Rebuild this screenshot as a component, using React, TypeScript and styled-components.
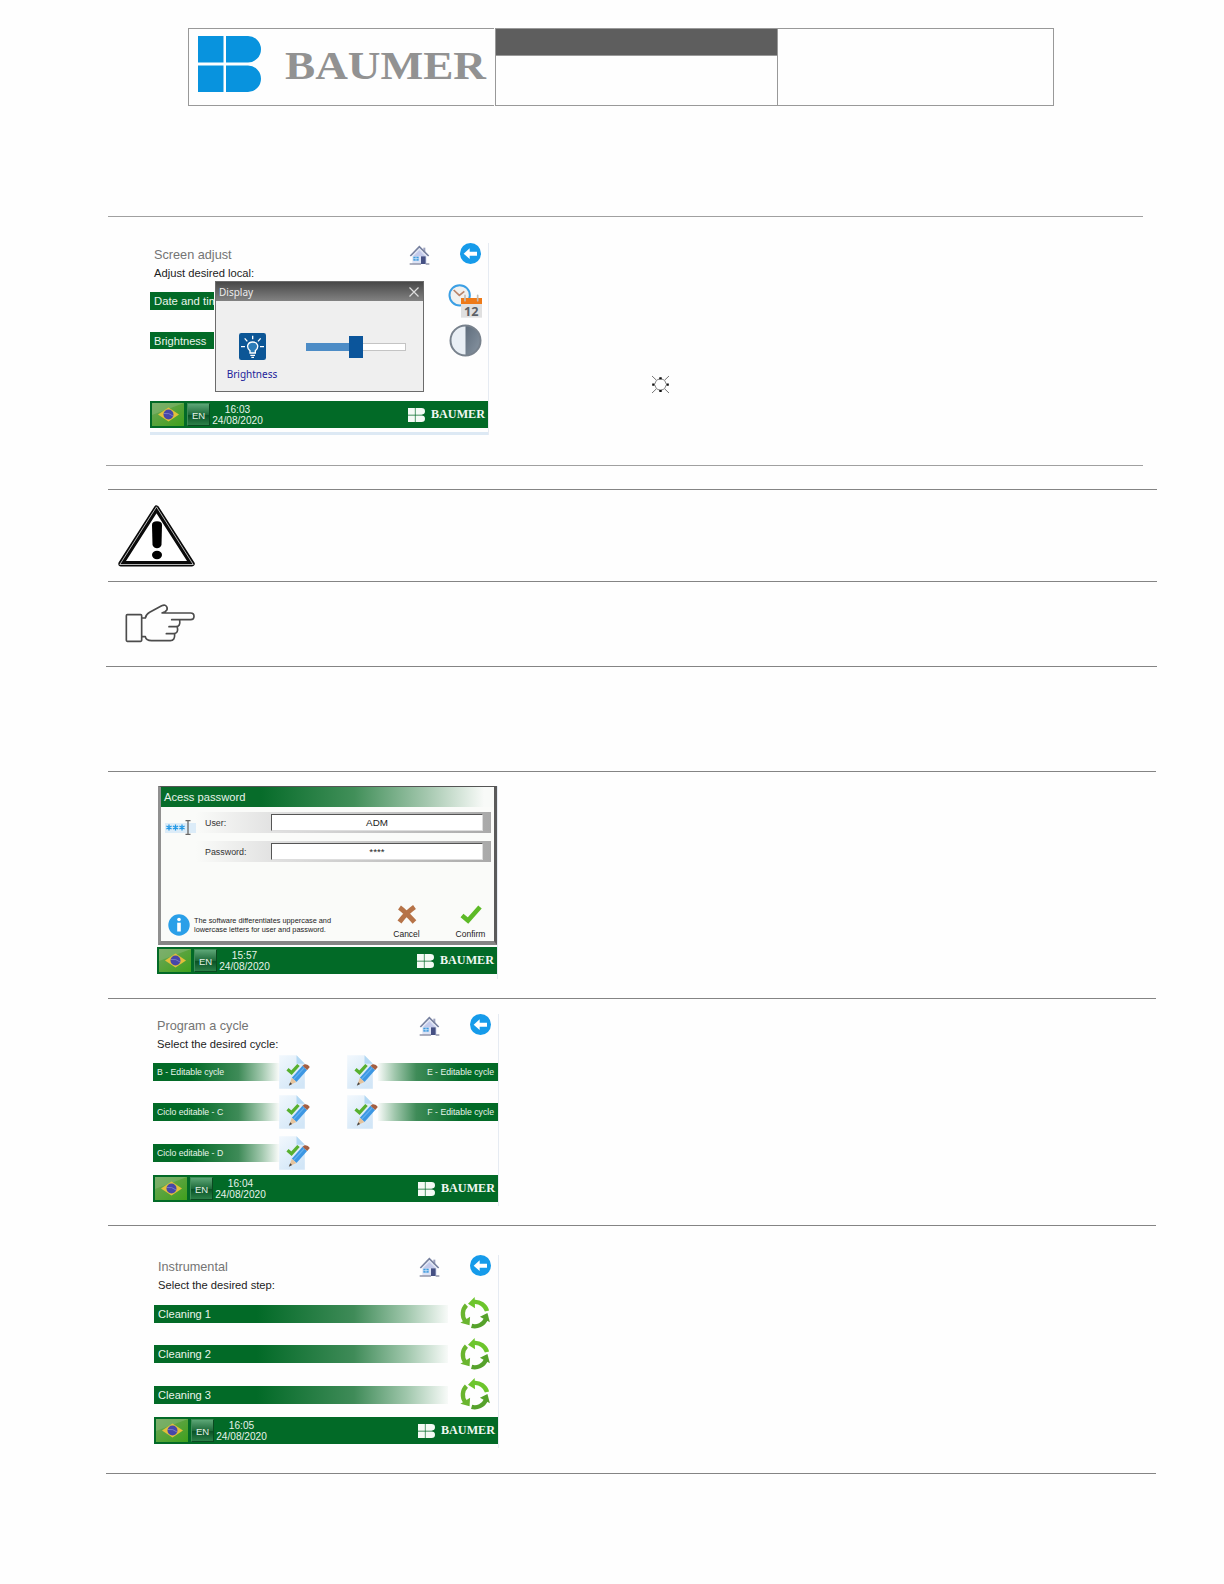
import React from 'react';
import styled, { createGlobalStyle } from 'styled-components';

const GlobalStyle = createGlobalStyle`
  * {
    box-sizing: border-box;
  }
  body {
    margin: 0;
    background: #fefefe;
    font-family: 'Liberation Sans', Arial, sans-serif;
  }
  svg {
    display: block;
    flex: none;
    overflow: visible;
  }
`;

const GREEN = '#026a27';

const Page = styled.div`
  width: 1224px;
  height: 1584px;
  padding-top: 28px;
  overflow: hidden;
`;
const Letterhead = styled.header`
  display: grid;
  grid-template-columns: 306px 283px 276px;
  column-gap: 0;
  height: 78px;
  margin: 0 0 110px 188px;
`;
const LogoCell = styled.div`
  border: 1px solid #999;
  border-right: 0;
  padding: 7px 0 0 9px;
`;
const MiddleCell = styled.div`
  margin-left: 1px;
  width: 283px;
  border: 1px solid #999;
`;
const DarkStrip = styled.div`
  height: 27px;
  background: #5e5e5e;
  border-bottom: 1px solid #999;
`;
const LastCell = styled.div`
  margin-left: 1px;
  width: 276px;
  border: 1px solid #999;
  border-left: 0;
`;

const Row = styled.section<{
  $h: number;
  $w: number;
  $wide?: boolean;
  $light?: boolean;
  $pad?: string;
}>`
  display: flex;
  align-items: flex-start;
  height: ${(p) => p.$h}px;
  width: ${(p) => p.$w}px;
  margin-left: ${(p) => (p.$wide ? 106 : 108)}px;
  padding: ${(p) => p.$pad || 0};
  border-top: 1px solid ${(p) => (p.$light ? '#a0a0a0' : '#848484')};
`;

const Screen = styled.div<{ $w: number; $h: number }>`
  position: relative;
  display: flex;
  flex-direction: column;
  width: ${(p) => p.$w}px;
  height: ${(p) => p.$h}px;
  border-right: 1px solid #e6ebf2;
`;
const Head = styled.div`
  display: flex;
  justify-content: space-between;
  height: 37px;
  padding: 0 7px 0 4px;
`;
const Title = styled.div`
  font-size: 12.7px;
  line-height: 25px;
  height: 24px;
  color: #747474;
  white-space: nowrap;
`;
const Subtitle = styled.div`
  font-size: 11.2px;
  line-height: 13px;
  color: #1c1c1c;
  white-space: nowrap;
`;
const HeadIcons = styled.div`
  display: flex;
  gap: 30px;
  align-items: flex-start;
`;
const HomeSlot = styled.div`
  padding-top: 2px;
`;

const Bar = styled.div<{ $h?: number; $fade?: 'left' | 'right'; $size?: number; $from?: number }>`
  flex: 1;
  height: ${(p) => p.$h || 18}px;
  line-height: ${(p) => (p.$h || 18) + 1}px;
  padding: 0 4px;
  font-size: ${(p) => p.$size || 11.1}px;
  color: #e9f5ec;
  white-space: nowrap;
  text-align: ${(p) => (p.$fade === 'left' ? 'right' : 'left')};
  background: ${(p) =>
    p.$fade
      ? `linear-gradient(to ${p.$fade}, ${GREEN} ${p.$from || 35}%, #3f8b58 68%, #a0c7ac 86%, #fefefe 101%)`
      : GREEN};
`;

const Footer = styled.div<{ $w: number }>`
  display: flex;
  align-items: center;
  flex: none;
  width: ${(p) => p.$w}px;
  height: 27px;
  padding: 0 3px 0 2px;
  background: ${GREEN};
`;
const LangButton = styled.div`
  width: 23px;
  height: 23px;
  margin-left: 3px;
  border: 1px solid #3f8d58;
  border-right-color: #0a4a20;
  border-bottom-color: #0a4a20;
  background: linear-gradient(#5ca676, #1f6b3b 50%, #0a5226 55%, #2c8049);
  color: #e4f2e8;
  font-size: 9.5px;
  line-height: 23px;
  text-align: center;
`;
const Clock = styled.div`
  width: 53px;
  margin: 1px 0 0 1px;
  color: #e6f3ea;
  font-size: 10.1px;
  line-height: 11px;
  text-align: center;
  white-space: nowrap;
`;
const Brand = styled.div`
  display: flex;
  align-items: center;
  gap: 6px;
  margin-left: auto;
`;

const LogoMark = ({ w, h, fill }: { w: number; h: number; fill: string }) => (
  <svg width={w} height={h} viewBox="0 0 63 56" preserveAspectRatio="none" fill={fill}>
    <path d="M0 0H25.5V26.5H0ZM0 29.5H25.5V56H0Z" />
    <path d="M28 0H50A13 13.25 0 0 1 50 26.5H28ZM28 29.5H50A13 13.25 0 0 1 50 56H28Z" />
  </svg>
);
const LogoName = ({ w, h, size, fill }: { w: number; h: number; size: number; fill: string }) => (
  <svg width={w} height={h}>
    <text
      x="0"
      y={h - 1}
      fill={fill}
      fontFamily="'Liberation Serif', serif"
      fontWeight="bold"
      fontSize={size}
      textLength={w}
      lengthAdjust="spacingAndGlyphs"
    >
      BAUMER
    </text>
  </svg>
);
const BigLogo = styled.div`
  display: flex;
  gap: 24px;
`;
const BigName = styled.div`
  padding-top: 14px;
`;

const Flag = () => (
  <svg width="32" height="23" viewBox="0 0 32 23">
    <defs>
      <linearGradient id="flagGreen" x1="0" y1="0" x2="1" y2="1">
        <stop offset="0" stopColor="#6fa65c" />
        <stop offset="0.5" stopColor="#57a33a" />
        <stop offset="1" stopColor="#3fa01c" />
      </linearGradient>
    </defs>
    <rect width="32" height="23" fill="url(#flagGreen)" />
    <path d="M0 0H32L0 12Z" fill="#8fbb80" opacity="0.45" />
    <path d="M6 11.5L16.5 4.5L27 11.5L16.5 18.5Z" fill="#e2bf3b" />
    <circle cx="16.5" cy="11.5" r="5" fill="#4747a8" />
    <path d="M12 10.5Q17 9.500 21 13" stroke="#8484cc" strokeWidth="0.800" fill="none" />
  </svg>
);
const HomeIcon = () => (
  <svg width="21" height="20" viewBox="0 0 63 60">
    <path d="M43 8H49V22H43Z" fill="#9aa0bd" />
    <path d="M10 32L31 10L53 32V57H10Z" fill="#dde3f5" />
    <path d="M4 33L31 5L59 33" fill="none" stroke="#76809f" strokeWidth="5" />
    <path d="M13 34L31 16L49 34Z" fill="#c3caea" />
    <path d="M36 34H50V57H36Z" fill="#465184" />
    <path d="M13 35H29V47H13Z" fill="#3d9adf" />
    <path d="M21 35V47M13 41H29" stroke="#e8f2fc" strokeWidth="2" />
    <path d="M2 55H36V59H2ZM50 55H61V59H50Z" fill="#9297ab" />
  </svg>
);
const BackIcon = () => (
  <svg width="21" height="21" viewBox="0 0 63 63">
    <circle cx="31.500" cy="31.500" r="31.500" fill="#169bea" />
    <path d="M11 32L29 16V26H51V38H29V48Z" fill="#fff" />
  </svg>
);
const DateTimeIcon = () => (
  <svg width="34" height="34" viewBox="0 0 102 102">
    <circle cx="35" cy="34" r="30.500" fill="#f1f1f0" stroke="#3b9fe4" strokeWidth="6" />
    <path d="M17 18L34 34L49 22" fill="none" stroke="#b9846a" strokeWidth="5" />
    <rect x="39" y="50" width="63" height="51" fill="#e0e0e0" />
    <rect x="39" y="42" width="63" height="18" fill="#ee7a18" />
    <path d="M51 34V50M89 34V50" stroke="#c4bcb4" strokeWidth="5" strokeLinecap="round" />
    <text x="48" y="95" fontFamily="'Open Sans', sans-serif" fontWeight="bold" fontSize="38" fill="#5b6066">
      12
    </text>
  </svg>
);
const ContrastIcon = () => (
  <svg width="33" height="33" viewBox="0 0 33 33">
    <defs>
      <linearGradient id="contrastDark" x1="0" y1="0" x2="1" y2="1">
        <stop offset="0" stopColor="#5f6d7c" />
        <stop offset="1" stopColor="#8996a3" />
      </linearGradient>
    </defs>
    <circle cx="16.500" cy="16.500" r="15" fill="#e9eff5" />
    <path d="M16.500 1.500A15 15 0 0 1 16.500 31.500Z" fill="url(#contrastDark)" />
    <circle cx="16.500" cy="16.500" r="15" fill="none" stroke="#78828d" strokeWidth="2" />
  </svg>
);
const SunIcon = () => (
  <svg width="19" height="19" viewBox="0 0 19 19">
    <path
      d="M9.500 3.500L13.500 5.200L15.500 9.500L13.500 13.800L9.500 15.500L5.500 13.800L3.500 9.500L5.500 5.200Z"
      fill="none"
      stroke="#777"
      strokeWidth="0.900"
    />
    <path d="M1 1L5 4.800M18 1L14 4.800M1 18L5 14.200M18 18L14 14.200" stroke="#666" strokeWidth="0.900" />
    <path
      d="M8.300 2.200h2.400v2.200h-2.400zM8.300 14.800h2.400v2.200h-2.400zM1.200 8.400h2.200v2.400h-2.200zM15.600 8.400h2.200v2.400h-2.200z"
      fill="#111"
    />
  </svg>
);
const WarningIcon = () => (
  <svg width="77" height="62" viewBox="0 0 77 62">
    <path d="M38.500 3.200L74 58.700H3Z" fill="#fff" stroke="#0a0a0a" strokeWidth="5.400" strokeLinejoin="round" />
    <path d="M38.500 1.800L75.200 59.500H1.800Z" fill="none" stroke="#fff" strokeWidth="0.700" strokeLinejoin="round" />
    <path d="M34 20Q34 16.300 39 16.300T44 20L43.500 40Q42 43.300 39 43.300T34.500 40Z" fill="#000" />
    <ellipse cx="39" cy="50" rx="5" ry="4.200" fill="#000" />
  </svg>
);
const HandIcon = () => (
  <svg
    width="71"
    height="39"
    viewBox="76 447 213 117"
    fill="none"
    stroke="#4c4c4c"
    strokeWidth="5"
    strokeLinejoin="round"
    strokeLinecap="round"
  >
    <rect x="80" y="479" width="46" height="80" rx="3" />
    <path d="M127 489H137Q139 478 150 472L186 452Q198 447 202 457Q205 465 196 470L187 474H273Q283 474 283 484Q283 494 273 494H216" />
    <path d="M240 495Q243 515 229 515H208M233 516Q237 535 222 536H200M225 537Q226 557 212 557H156Q139 557 137 545H127" />
  </svg>
);
const BulbIcon = () => (
  <svg width="27" height="27" viewBox="0 0 81 81">
    <rect width="81" height="81" rx="7" fill="#0c5696" />
    <path d="M33 60V53C20 42 26 27 41 27S62 42 49 53V60Z" fill="#2c7cb8" stroke="#fff" strokeWidth="4" />
    <path d="M34 67H48M37 73H45" stroke="#fff" strokeWidth="4" />
    <path d="M41 8V19M17 16L25 25M65 16L57 25M6 41H18M63 41H75" stroke="#fff" strokeWidth="4" />
  </svg>
);
const DocIcon = () => (
  <svg width="31" height="34" viewBox="0 0 92 102">
    <defs>
      <linearGradient id="docPaper" x1="0" y1="0" x2="0.7" y2="1">
        <stop offset="0" stopColor="#f2f8fd" />
        <stop offset="1" stopColor="#d2e6f7" />
      </linearGradient>
    </defs>
    <path d="M0 1H52L77 26V101H0Z" fill="url(#docPaper)" />
    <path d="M52 1L77 26H52Z" fill="#b3d8f3" />
    <path d="M25 43L37 53L58 30" fill="none" stroke="#57b02f" strokeWidth="10" />
    <path d="M38 68L70 32L84 45L52 81Z" fill="#3d97e3" />
    <path d="M43 73L76 37" stroke="#64b0ee" strokeWidth="4" />
    <path d="M70 32L76 28Q86 26 92 36L84 45Z" fill="#a35f43" />
    <path d="M38 68L52 81L30 91Z" fill="#e5c39c" />
    <path d="M33 82L39 87L29 92Z" fill="#444" />
  </svg>
);

const cycleGreens = ['#6cc52c', '#6ab52f', '#56a22b'];
const CycleIcon = () => (
  <svg width="30" height="32" viewBox="0 0 90 96">
    {[0, -120, -240].map((angle, i) => (
      <g key={angle} transform={`rotate(${angle} 45 51)`}>
        <path d="M81 42A37 37 0 0 0 42 15" fill="none" stroke={cycleGreens[i]} strokeWidth="13" />
        <path d="M24 20L44 0L45 34Z" fill={cycleGreens[i]} />
      </g>
    ))}
  </svg>
);

const StatusBar = ({ time, w }: { time: string; w: number }) => (
  <Footer $w={w}>
    <Flag />
    <LangButton>EN</LangButton>
    <Clock>
      <div>{time}</div>
      <div>24/08/2020</div>
    </Clock>
    <Brand>
      <LogoMark w={17} h={14} fill="#f4faf5" />
      <LogoName w={54} h={9} size={11.5} fill="#f0f7f2" />
    </Brand>
  </Footer>
);

const ScreenHead = ({ title, subtitle }: { title: string; subtitle: string }) => (
  <Head>
    <div>
      <Title>{title}</Title>
      <Subtitle>{subtitle}</Subtitle>
    </div>
    <HeadIcons>
      <HomeSlot>
        <HomeIcon />
      </HomeSlot>
      <BackIcon />
    </HeadIcons>
  </Head>
);

/* screen adjust */
const AdjustBody = styled.div`
  display: flex;
  justify-content: space-between;
  height: 121px;
  padding-right: 6px;
`;
const AdjustBars = styled.div`
  display: flex;
  flex-direction: column;
  gap: 22px;
  width: 64px;
  padding-top: 12px;
  & > div {
    flex: none;
  }
`;
const AdjustIcons = styled.div`
  display: flex;
  flex-direction: column;
  align-items: center;
  gap: 6px;
  padding-top: 4px;
`;
const BlueStrip = styled.div`
  height: 3px;
  margin-top: 4px;
  background: #dde9f4;
`;
const Dialog = styled.div`
  position: absolute;
  left: 65px;
  top: 38px;
  width: 209px;
  height: 111px;
  border: 1px solid #6b6b6b;
  background: #efefef;
`;
const DialogTitle = styled.div`
  display: flex;
  align-items: center;
  justify-content: space-between;
  height: 19px;
  padding: 0 4px 0 3px;
  background: linear-gradient(#484848, #828282);
  color: #ececec;
  font: 10px 'Noto Sans', sans-serif;
`;
const DialogBody = styled.div`
  display: flex;
`;
const Lamp = styled.div`
  display: flex;
  flex-direction: column;
  align-items: center;
  width: 50px;
  margin: 32px 0 0 11px;
  color: #22229a;
  font: 10px/14px 'Noto Sans', sans-serif;
  gap: 7px;
`;
const Slider = styled.div`
  display: flex;
  align-items: center;
  width: 100px;
  height: 22px;
  margin: 35px 0 0 29px;
`;
const Filled = styled.div`
  width: 43px;
  height: 8px;
  background: #4d8cc6;
`;
const Thumb = styled.div`
  width: 14px;
  height: 22px;
  background: #0b559b;
`;
const Rest = styled.div`
  flex: 1;
  height: 8px;
  background: #fff;
  border: 1px solid #c4c4c4;
  border-left: 0;
`;
const SunSlot = styled.div`
  margin: 131.5px 0 0 161.5px;
`;

/* password */
const LoginBox = styled.div`
  width: 339px;
  height: 159px;
  margin: 0 0 2px 1px;
  border: 3px solid #858585;
  border-width: 1px 3px 4px 3px;
  border-color: #555 #5a5a5a #858585 #909090;
  background: #fafbf9;
`;
const LoginTitle = styled.div`
  height: 20px;
  margin-bottom: 5px;
  padding-left: 3px;
  background: linear-gradient(to right, #076c2a 30%, #418f59 58%, #a5c8af 80%, #f8faf8 97%);
  color: #e6f3ea;
  font-size: 11.2px;
  line-height: 21px;
`;
const LoginFields = styled.div`
  display: flex;
  height: 92px;
`;
const StarSlot = styled.div`
  width: 35px;
  padding: 8px 0 0 4px;
`;
const FieldList = styled.div`
  display: flex;
  flex-direction: column;
  flex: 1;
  gap: 8px;
  margin-right: 3px;
`;
const Field = styled.label`
  display: flex;
  align-items: center;
  height: 21px;
  padding: 0 8px 0 9px;
  background: linear-gradient(to right, #fafbf9, #dedede 30%, #a9a9a9);
  color: #333;
  font-size: 8.9px;
`;
const FieldName = styled.span`
  width: 66px;
`;
const Input = styled.span`
  flex: 1;
  height: 17px;
  border: 1px solid #ddd;
  border-top-color: #555;
  border-left-color: #555;
  background: #fff;
  color: #222;
  font-size: 9.8px;
  line-height: 16px;
  text-align: center;
`;
const LoginActions = styled.div`
  display: flex;
  padding-left: 7px;
`;
const InfoText = styled.p`
  flex: none;
  width: 194px;
  margin: 12px 0 0 4px;
  color: #222;
  font-size: 7.35px;
  line-height: 9px;
  white-space: nowrap;
`;
const Action = styled.div`
  display: flex;
  flex-direction: column;
  flex: none;
  align-items: center;
  gap: 4px;
  width: 35px;
  margin: 1px 0 0 1px;
  color: #222;
  font-size: 8.5px;
  line-height: 12px;

  & + & {
    margin-left: 29px;
  }
`;
const InfoSlot = styled.div`
  padding-top: 10px;
`;

/* cycles */
const CycleGrid = styled.div`
  display: grid;
  grid-template-columns: 157px 151px;
  column-gap: 37px;
  row-gap: 6.300px;
  height: 124px;
  padding-top: 4px;
  align-content: start;
`;
const CycleItem = styled.div<{ $right?: boolean }>`
  display: flex;
  flex-direction: ${(p) => (p.$right ? 'row-reverse' : 'row')};
  align-items: center;
  height: 34px;
`;
const StepList = styled.div`
  display: flex;
  flex-direction: column;
  gap: 8.500px;
  height: 125px;
  padding-top: 5px;
`;
const Step = styled.div`
  display: flex;
  align-items: center;
  justify-content: space-between;
  height: 32px;
  padding-right: 8px;
`;
const StepBar = styled.div`
  display: flex;
  width: 294px;
  margin-top: 1px;
`;

const cycles = [
  { name: 'B - Editable cycle' },
  { name: 'E - Editable cycle', right: true },
  { name: 'Ciclo editable - C' },
  { name: 'F - Editable cycle', right: true },
  { name: 'Ciclo editable - D' },
];
const steps = ['Cleaning 1', 'Cleaning 2', 'Cleaning 3'];

const AdjustScreen = () => (
  <Screen $w={339} $h={192}>
    <ScreenHead title="Screen adjust" subtitle="Adjust desired local:" />
    <AdjustBody>
      <AdjustBars>
        <Bar $size={11.3}>Date and time</Bar>
        <Bar $h={17}>Brightness</Bar>
      </AdjustBars>
      <AdjustIcons>
        <DateTimeIcon />
        <ContrastIcon />
      </AdjustIcons>
    </AdjustBody>
    <StatusBar time="16:03" w={338} />
    <BlueStrip />
    <Dialog>
      <DialogTitle>
        <span>Display</span>
        <svg width="10" height="10" viewBox="0 0 10 10" stroke="#ddd" strokeWidth="1.200">
          <path d="M0.500 0.500L9.500 9.500M9.500 0.500L0.500 9.500" />
        </svg>
      </DialogTitle>
      <DialogBody>
        <Lamp>
          <BulbIcon />
          Brightness
        </Lamp>
        <Slider>
          <Filled />
          <Thumb />
          <Rest />
        </Slider>
      </DialogBody>
    </Dialog>
  </Screen>
);

const PasswordScreen = () => (
  <Screen $w={341} $h={193}>
    <LoginBox>
      <LoginTitle>Acess password</LoginTitle>
      <LoginFields>
        <StarSlot>
          <svg width="32" height="15" viewBox="0 0 32 15">
            <rect y="3" width="32" height="10" fill="#dcecf8" />
            <g stroke="#2399e6" strokeWidth="1.300">
              {[4, 10.5, 17].map((x) => (
                <path
                  key={x}
                  d={`M${x} 4.500V10.500M${x - 2.6} 6L${x + 2.6} 9M${x + 2.6} 6L${x - 2.6} 9`}
                />
              ))}
            </g>
            <path d="M20.500 0.700H25.500M23 0.700V14.300M20.500 14.300H25.500" fill="none" stroke="#666" strokeWidth="1.300" />
          </svg>
        </StarSlot>
        <FieldList>
          <Field>
            <FieldName>User:</FieldName>
            <Input>ADM</Input>
          </Field>
          <Field>
            <FieldName>Password:</FieldName>
            <Input>****</Input>
          </Field>
        </FieldList>
      </LoginFields>
      <LoginActions>
        <InfoSlot>
          <svg width="22" height="22" viewBox="0 0 22 22">
            <circle cx="11" cy="11" r="10.700" fill="#2a9fe8" />
            <circle cx="11" cy="5.500" r="1.800" fill="#fff" />
            <path d="M9.200 8.700H12.800V17.500H9.200Z" fill="#fff" />
          </svg>
        </InfoSlot>
        <InfoText>
          The software differentiates uppercase and
          <br />
          lowercase letters for user and password.
        </InfoText>
        <Action>
          <svg width="20" height="19" viewBox="0 0 20 19">
            <path d="M2.500 2.500Q8 6.500 17.500 17M17.500 2Q9 8 2.500 17" fill="none" stroke="#b67348" strokeWidth="4.900" />
          </svg>
          Cancel
        </Action>
        <Action>
          <svg width="22" height="19" viewBox="0 0 22 19">
            <path d="M2 10.500L8 15.500L20 2" fill="none" stroke="#5dba27" strokeWidth="4.600" />
          </svg>
          Confirm
        </Action>
      </LoginActions>
    </LoginBox>
    <StatusBar time="15:57" w={340} />
  </Screen>
);

export default function App() {
  return (
    <Page>
      <GlobalStyle />
      <Letterhead>
        <LogoCell>
          <BigLogo>
            <LogoMark w={63} h={56} fill="#0893de" />
            <BigName>
              <LogoName w={201} h={30} size={40} fill="#929292" />
            </BigName>
          </BigLogo>
        </LogoCell>
        <MiddleCell>
          <DarkStrip />
        </MiddleCell>
        <LastCell />
      </Letterhead>

      <Row $h={249} $w={1035} $light $pad="26px 0 0 42px">
        <AdjustScreen />
        <SunSlot>
          <SunIcon />
        </SunSlot>
      </Row>
      <Row $h={24} $w={1037} $wide $light />
      <Row $h={92} $w={1049} $pad="15px 0 0 10px">
        <WarningIcon />
      </Row>
      <Row $h={85} $w={1049} $pad="22px 0 0 17px">
        <HandIcon />
      </Row>
      <Row $h={105} $w={1051} $wide />
      <Row $h={227} $w={1048} $pad="14px 0 0 49px">
        <PasswordScreen />
      </Row>
      <Row $h={227} $w={1048} $pad="15px 0 0 45px">
        <Screen $w={346} $h={192}>
          <ScreenHead title="Program a cycle" subtitle="Select the desired cycle:" />
          <CycleGrid>
            {cycles.map((c) => (
              <CycleItem key={c.name} $right={c.right}>
                <Bar $size={8.7} $fade={c.right ? 'left' : 'right'} $from={30}>
                  {c.name}
                </Bar>
                <DocIcon />
              </CycleItem>
            ))}
          </CycleGrid>
          <StatusBar time="16:04" w={345} />
        </Screen>
      </Row>
      <Row $h={248} $w={1048} $pad="29px 0 0 46px">
        <Screen $w={345} $h={193}>
          <ScreenHead title="Instrumental" subtitle="Select the desired step:" />
          <StepList>
            {steps.map((s) => (
              <Step key={s}>
                <StepBar>
                  <Bar $fade="right">{s}</Bar>
                </StepBar>
                <CycleIcon />
              </Step>
            ))}
          </StepList>
          <StatusBar time="16:05" w={344} />
        </Screen>
      </Row>
      <Row $h={1} $w={1050} $wide />
    </Page>
  );
}
